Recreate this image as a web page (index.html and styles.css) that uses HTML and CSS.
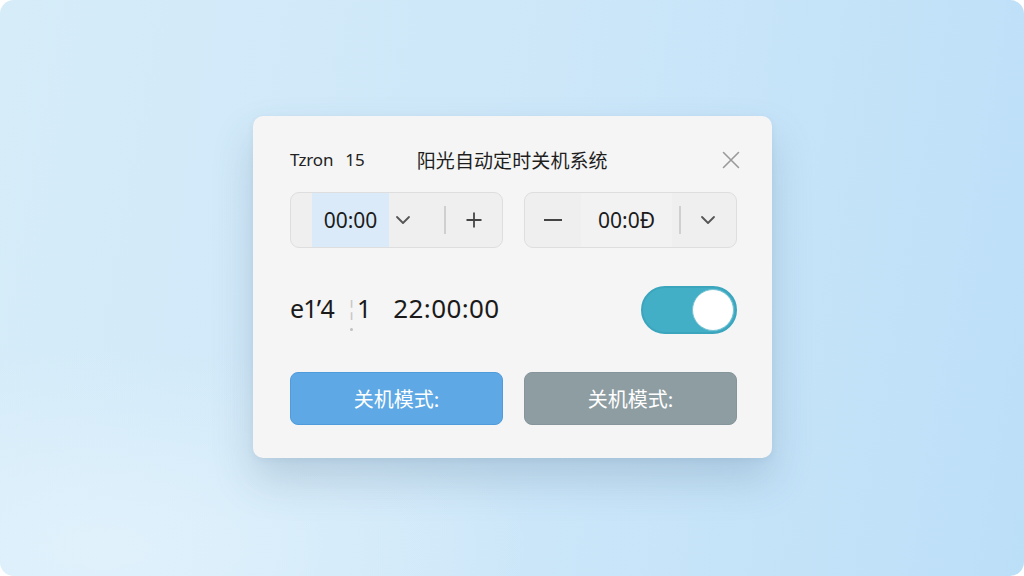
FILE: index.html
```html
<!DOCTYPE html>
<html lang="zh-CN">
	<head>
		<meta charset="UTF-8" />
		<meta name="viewport" content="width=device-width, initial-scale=1.0" />
		<title>阳光自动定时关机系统</title>
		<link rel="stylesheet" href="styles.css">
	</head>
	<body>
		<div class="screen">
			<div class="card">
				<div class="header">
					<span class="brand">Tzron</span>
					<span class="version">15</span>
					<h1 class="title">阳光自动定时关机系统</h1>
					<button class="close" aria-label="close">
						<svg width="18" height="18" viewBox="0 0 18 18">
							<path d="M1.5 1.5 L16.5 16.5 M16.5 1.5 L1.5 16.5" stroke="#9a9a9a" stroke-width="1.6" fill="none" stroke-linecap="round" />
						</svg>
					</button>
				</div>

				<div class="time-row">
					<div class="time-box">
						<span class="pad-left"></span>
						<span class="time-value selected">00:00</span>
						<span class="chev">
							<svg width="16" height="10" viewBox="0 0 16 10"><path d="M2 2 L8 8 L14 2" stroke="#555" stroke-width="1.8" fill="none" stroke-linecap="round" stroke-linejoin="round" /></svg>
						</span>
						<span class="spacer"></span>
						<span class="divider"></span>
						<span class="step plus">
							<svg width="18" height="18" viewBox="0 0 18 18"><path d="M9 1.5 V16.5 M1.5 9 H16.5" stroke="#444" stroke-width="1.8" fill="none" /></svg>
						</span>
					</div>
					<div class="time-box">
						<span class="step minus">
							<svg width="20" height="4" viewBox="0 0 20 4"><path d="M1 2 H19" stroke="#444" stroke-width="2.2" fill="none" /></svg>
						</span>
						<span class="time-value wide">00:0Ð</span>
						<span class="gap"></span>
						<span class="divider"></span>
						<span class="step chev-end">
							<svg width="16" height="10" viewBox="0 0 16 10"><path d="M2 2 L8 8 L14 2" stroke="#555" stroke-width="1.8" fill="none" stroke-linecap="round" stroke-linejoin="round" /></svg>
						</span>
					</div>
				</div>

				<div class="status-row">
					<div class="status-text">
						<span class="day">e1’4</span>
						<span class="sep">¦</span>
						<span class="num">1</span>
						<span class="clock">22:00:00</span>
					</div>
					<div class="toggle on"><span class="knob"></span></div>
				</div>

				<div class="actions">
					<button class="btn primary">关机模式:</button>
					<button class="btn secondary">关机模式:</button>
				</div>
			</div>
		</div>
	</body>
</html>
```

FILE: styles.css
```css
html, body {
	margin: 0;
	padding: 0;
	background: #ffffff;
}

body {
	font-family: "Noto Sans", "Noto Sans CJK SC", sans-serif;
	color: #222;
}

.screen {
	height: 576px;
	border-radius: 14px;
	overflow: hidden;
	display: flex;
	align-items: center;
	justify-content: center;
	background:
		radial-gradient(ellipse 60% 50% at 10% 95%, rgba(226, 242, 252, 0.9), rgba(226, 242, 252, 0) 70%),
		linear-gradient(100deg, #d6ecf9 0%, #cde7f9 50%, #bcdff8 100%);
}

.card {
	width: 519px;
	box-sizing: border-box;
	padding: 28px 35px 33px 37px;
	background: #f5f5f5;
	border-radius: 10px;
	box-shadow: 0 22px 40px rgba(70, 100, 130, 0.22), 0 2px 6px rgba(70, 100, 130, 0.08);
	margin-top: -3px;
	margin-left: 1px;
}

/* header */
.header {
	display: flex;
	align-items: center;
	height: 32px;
}

.brand {
	font-size: 17px;
	color: #222;
	letter-spacing: -0.2px;
}

.version {
	font-size: 17px;
	margin-left: 12px;
	color: #222;
}

.title {
	margin: 0 0 0 52px;
	font-size: 19px;
	font-weight: 400;
	letter-spacing: 0.1px;
	font-family: "Noto Sans CJK SC", sans-serif;
	color: #1e1e1e;
}

.close {
	margin-left: auto;
	margin-right: -3px;
	border: none;
	background: none;
	padding: 0;
	width: 18px;
	height: 18px;
	display: flex;
	cursor: pointer;
}

/* time pickers */
.time-row {
	display: flex;
	gap: 21px;
	margin-top: 16px;
}

.time-box {
	flex: 1;
	height: 56px;
	box-sizing: border-box;
	border: 1.5px solid #dedede;
	border-radius: 9px;
	background: #efefef;
	display: flex;
	align-items: stretch;
	overflow: hidden;
}

.pad-left {
	width: 21px;
}

.time-value {
	display: flex;
	align-items: center;
	justify-content: center;
	font-size: 21px;
	color: #1c1c1c;
	letter-spacing: 0;
}

.time-value.selected {
	width: 77px;
	background: #dbeaf8;
}

.time-value.wide {
	width: 91px;
	background: #f2f2f2;
}

.chev {
	width: 28px;
	display: flex;
	align-items: center;
	justify-content: center;
}

.spacer {
	width: 27px;
}

.gap {
	width: 7px;
}

.divider {
	width: 1.5px;
	background: #cfcfcf;
	margin: 13px 0;
}

.step {
	flex: 1;
	display: flex;
	align-items: center;
	justify-content: center;
}

.step.minus {
	flex: 0 0 56px;
}

/* status */
.status-row {
	display: flex;
	align-items: center;
	justify-content: space-between;
	height: 48px;
	margin-top: 38px;
}

.status-text {
	display: flex;
	align-items: center;
	font-size: 25px;
	color: #1a1a1a;
	margin-top: -4px;
}

.day {
	letter-spacing: -0.8px;
}

.sep {
	position: relative;
	color: #c8c8c8;
	font-size: 20px;
	margin: 0 0 0 12px;
}

.sep::after {
	content: "";
	position: absolute;
	left: 50%;
	top: 34px;
	width: 3px;
	height: 3px;
	margin-left: -1.5px;
	border-radius: 50%;
	background: #c0c0c0;
}

.clock {
	margin-left: 22px;
	font-size: 26px;
	letter-spacing: 0.4px;
}

.toggle {
	width: 96px;
	height: 48px;
	box-sizing: border-box;
	border-radius: 24px;
	background: #43afc6;
	border: 2px solid #3aa5bd;
	display: flex;
	align-items: center;
	justify-content: flex-end;
	padding: 0 1px;
}

.knob {
	width: 42px;
	height: 42px;
	border-radius: 50%;
	background: #ffffff;
	box-sizing: border-box;
	border: 1px solid #7ac3d3;
}

/* buttons */
.actions {
	display: flex;
	gap: 21px;
	margin-top: 38px;
}

.btn {
	flex: 1;
	height: 53px;
	border-radius: 8px;
	font-family: "Noto Sans CJK SC", sans-serif;
	font-size: 20px;
	color: #ffffff;
	cursor: pointer;
}

.btn.primary {
	background: #5ea9e5;
	border: 1px solid #4f9bdc;
}

.btn.secondary {
	background: #8e9da2;
	border: 1px solid #86959b;
}
```
